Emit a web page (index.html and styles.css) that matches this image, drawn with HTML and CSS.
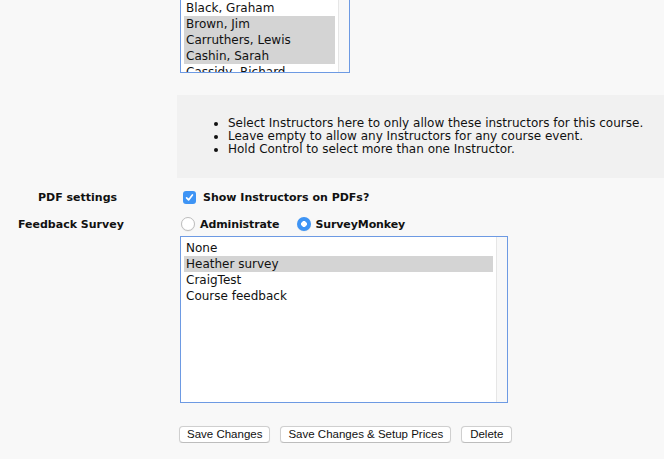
FILE: index.html
```html
<!DOCTYPE html>
<html>
<head>
<meta charset="utf-8">
<link rel="stylesheet" href="styles.css">
</head>
<body>
<div class="listbox top-list">
  <div class="options">
    <div class="opt">Black, Graham</div>
    <div class="opt sel">Brown, Jim</div>
    <div class="opt sel">Carruthers, Lewis</div>
    <div class="opt sel">Cashin, Sarah</div>
    <div class="opt">Cassidy, Richard</div>
  </div>
  <div class="track"></div>
</div>

<div class="info">
  <ul>
    <li>Select Instructors here to only allow these instructors for this course.</li>
    <li>Leave empty to allow any Instructors for any course event.</li>
    <li>Hold Control to select more than one Instructor.</li>
  </ul>
</div>

<div class="row row-pdf">
  <div class="label label-pdf">PDF settings</div>
  <div class="field">
    <span class="checkbox"><svg width="13" height="13" viewBox="0 0 13 13"><path d="M3.6 6.8 L5.6 8.9 L9.4 3.9" fill="none" stroke="#fff" stroke-width="1.7" stroke-linecap="round" stroke-linejoin="round"/></svg></span>
    <span class="ctext">Show Instructors on PDFs?</span>
  </div>
</div>

<div class="row row-fb">
  <div class="label label-fb">Feedback Survey</div>
  <div class="field">
    <span class="radio"></span>
    <span class="rtext">Administrate</span>
    <span class="radio on"></span>
    <span class="rtext rtext2">SurveyMonkey</span>
  </div>
</div>

<div class="listbox survey-list">
  <div class="options">
    <div class="opt">None</div>
    <div class="opt sel">Heather survey</div>
    <div class="opt">CraigTest</div>
    <div class="opt">Course feedback</div>
  </div>
  <div class="track"></div>
</div>

<div class="buttons">
  <button class="btn">Save Changes</button>
  <button class="btn">Save Changes &amp; Setup Prices</button>
  <button class="btn btn-del">Delete</button>
</div>
</body>
</html>
```

FILE: styles.css
```css
html, body {
  margin: 0;
  padding: 0;
  background: #f8f8f8;
  font-family: "DejaVu Sans", Verdana, sans-serif;
  color: #111;
}

.listbox {
  box-sizing: border-box;
  display: flex;
  background: #fff;
  border: 1px solid #6d9ae3;
  margin-left: 180px;
}

.listbox .options {
  flex: 1;
  overflow: hidden;
  padding: 0 3px;
}

.listbox .track {
  width: 10px;
  background: #f8f8f8;
  border-left: 1px solid #e6e6e6;
}

.opt {
  height: 16px;
  line-height: 16px;
  font-size: 12px;
  padding-left: 2px;
  white-space: nowrap;
  color: #111;
}

.opt.sel {
  background: #d4d4d4;
}

.top-list {
  width: 170px;
  height: 73px;
  border-top: none;
}

.survey-list {
  width: 328px;
  height: 167px;
  margin-top: 3px;
}

.survey-list .options {
  padding-top: 3px;
}

.info {
  margin-top: 22px;
  margin-left: 177px;
  background: #f1f1f1;
  padding: 22px 0;
  font-size: 12px;
  line-height: 13px;
}

.info ul {
  margin: 0;
  padding-left: 51px;
}

.row {
  display: grid;
  grid-template-columns: 180px 1fr;
  height: 18px;
  align-items: center;
  font-size: 11px;
  font-weight: bold;
}

.row-pdf {
  margin-top: 10px;
}

.row-fb {
  margin-top: 9px;
}

.label-pdf {
  padding-left: 38px;
}

.label-fb {
  padding-left: 18px;
}

.field {
  display: flex;
  align-items: center;
}

.checkbox {
  display: block;
  width: 13px;
  height: 13px;
  margin-left: 3px;
  margin-right: 7px;
  border-radius: 3px;
  background: #3e94f5;
}

.checkbox svg {
  display: block;
}

.radio {
  box-sizing: border-box;
  display: block;
  width: 14px;
  height: 14px;
  border-radius: 50%;
  background: #fff;
  border: 1px solid #bdbdbd;
  box-shadow: 0 0.5px 1px rgba(0,0,0,0.08);
  margin-left: 1px;
  margin-right: 5px;
}

.rtext {
  letter-spacing: -0.1px;
}

.radio.on {
  border: none;
  background: #3e94f5 radial-gradient(circle, #fff 0, #fff 2.6px, transparent 3.1px);
  margin-left: 18px;
  margin-right: 4px;
}

.buttons {
  display: flex;
  margin-top: 23px;
  margin-left: 179px;
}

.btn {
  box-sizing: border-box;
  height: 17px;
  padding: 0 7px;
  margin: 0 10px 0 0;
  font-family: "Liberation Sans", Arial, sans-serif;
  font-size: 11.5px;
  line-height: 15px;
  color: #111;
  background: #fff;
  border: 1px solid #cfcfcf;
  border-bottom-color: #bdbdbd;
  border-radius: 4px;
  box-shadow: 0 0.5px 1px rgba(0,0,0,0.06);
}

.btn-del {
  padding: 0 8px;
}
```
